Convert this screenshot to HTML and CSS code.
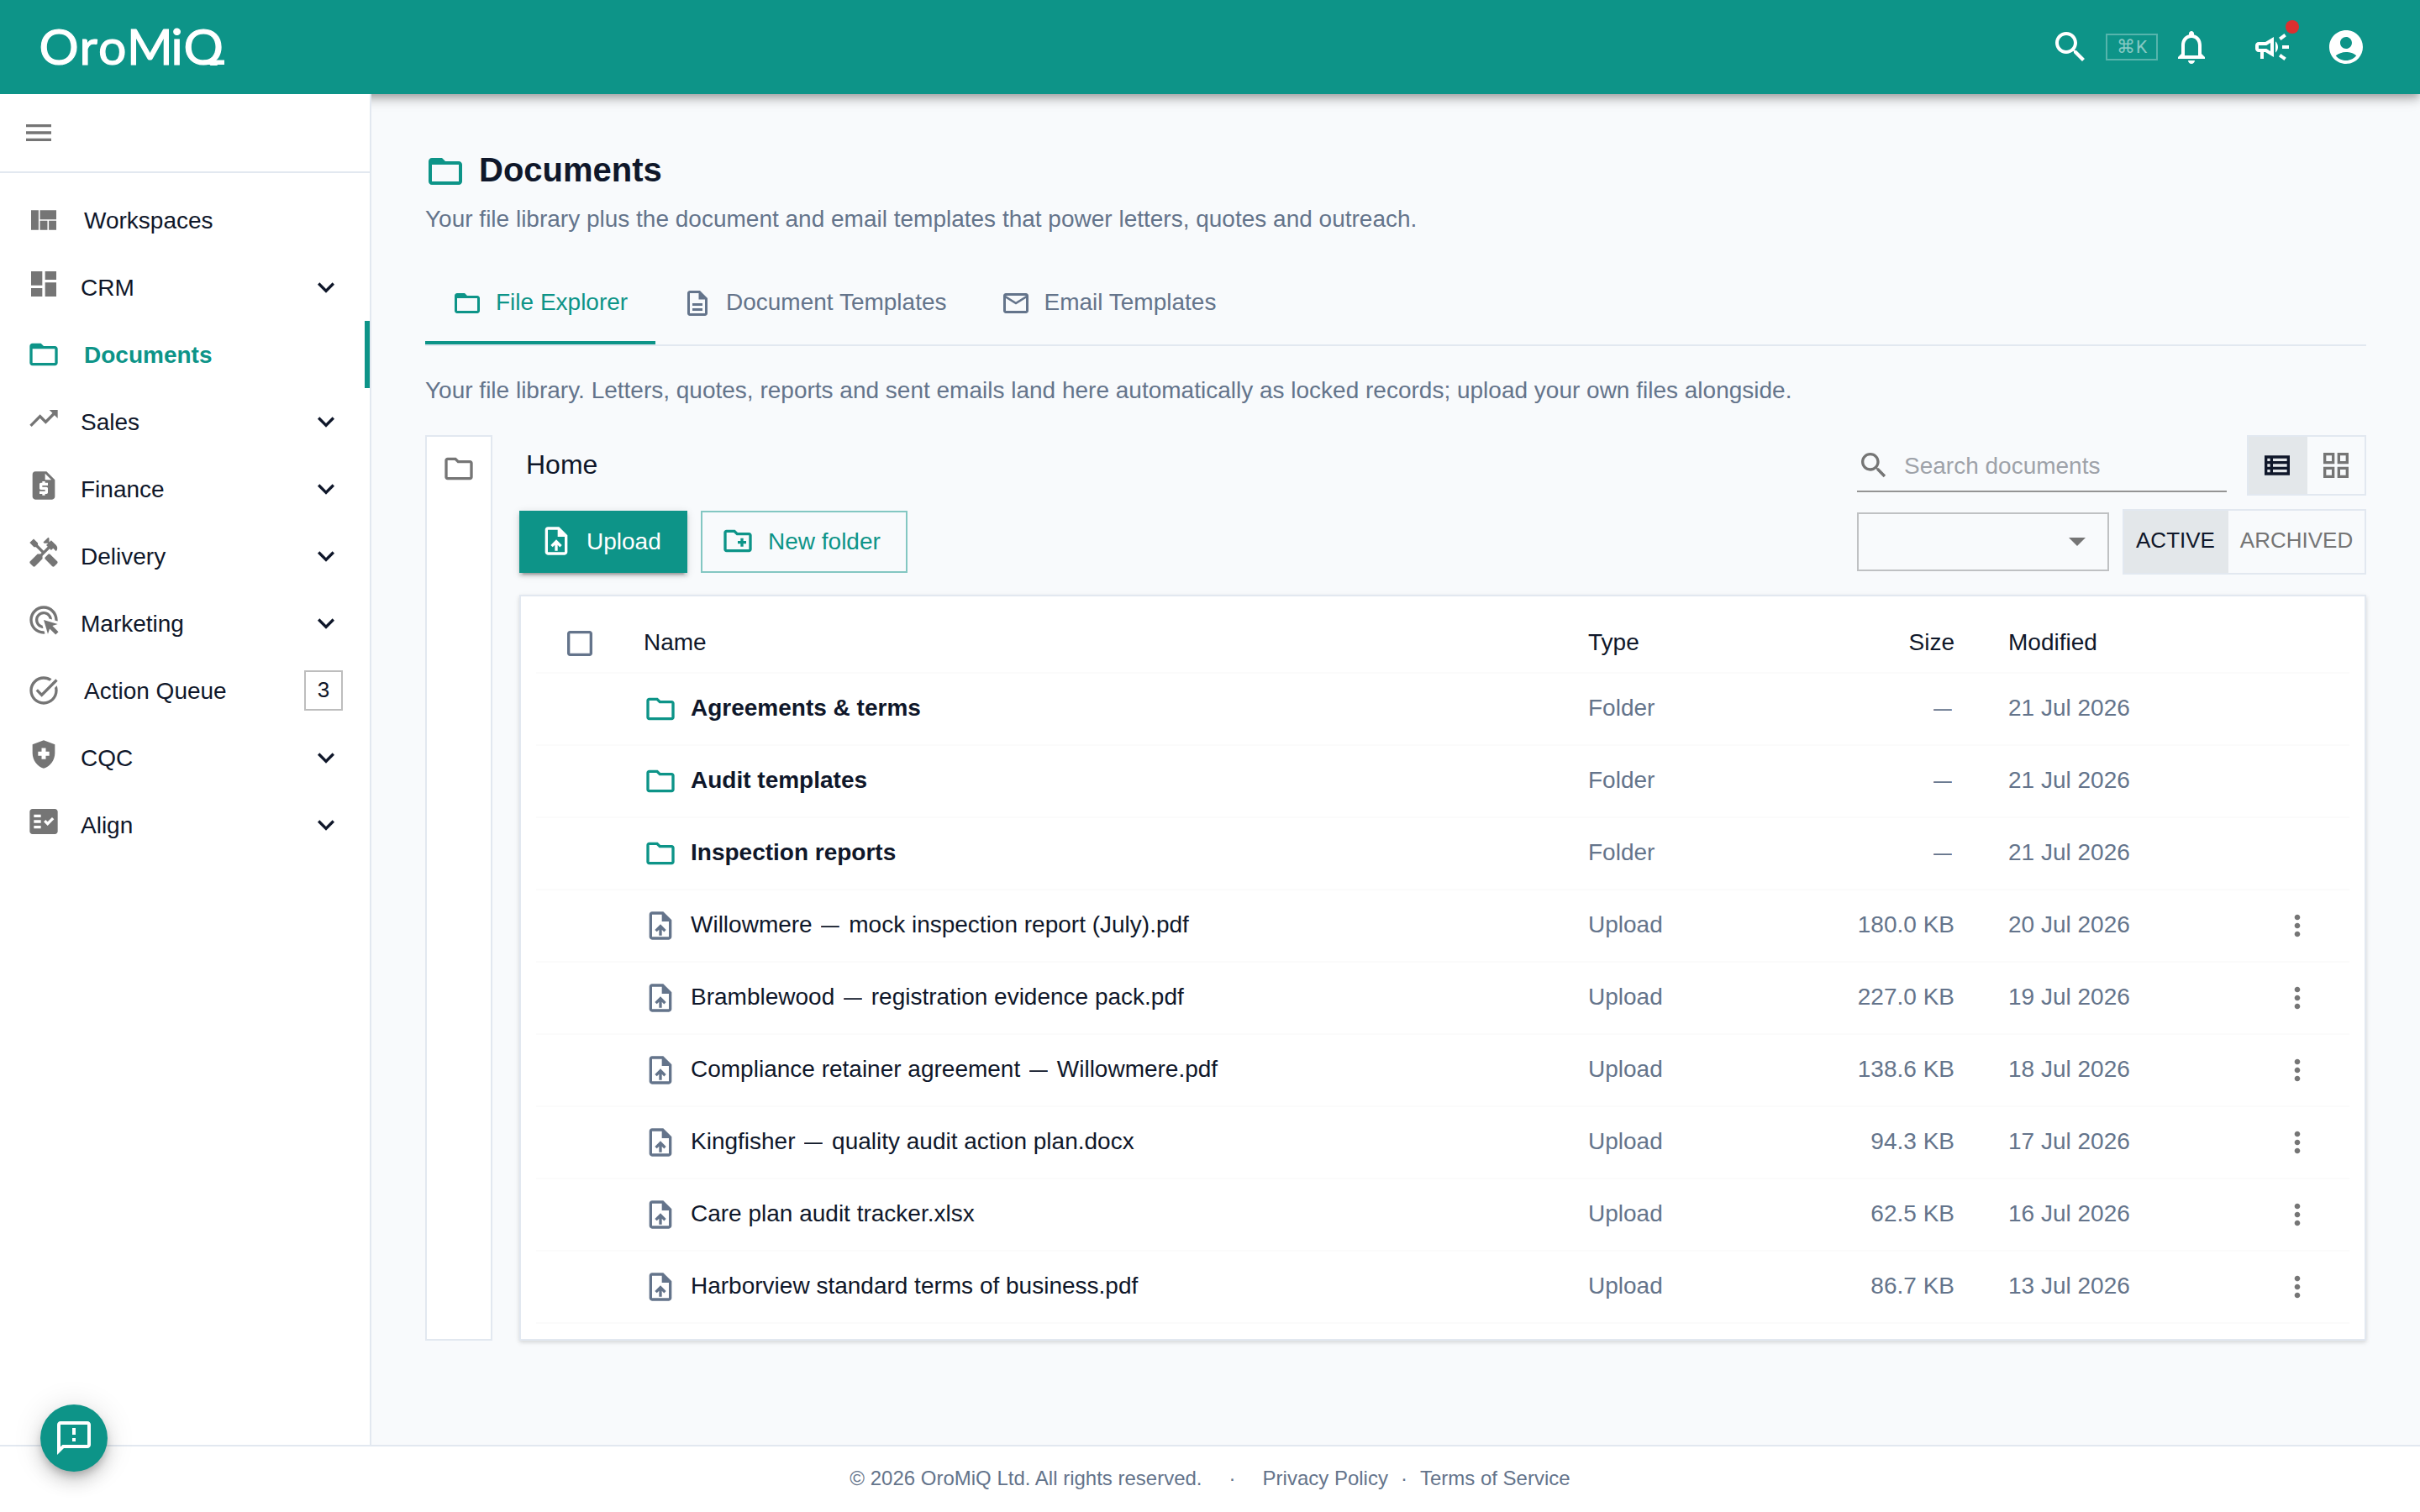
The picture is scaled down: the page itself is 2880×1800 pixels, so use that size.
FILE: index.html
```html
<!DOCTYPE html>
<html lang="en">
<head>
<meta charset="utf-8">
<title>Documents – OroMiQ</title>
<link rel="stylesheet" href="styles.css">
</head>
<body>
<svg class="sprite" aria-hidden="true">
  <symbol id="menu" viewBox="0 0 24 24"><path d="M3 18h18v-2H3v2zm0-5h18v-2H3v2zm0-7v2h18V6H3z"/></symbol>
  <symbol id="quilt" viewBox="0 0 24 24"><path d="M21 5v6.5H9.33V5H21zm-6.33 14v-6.5H9.33V19h5.34zm1-6.5V19H21v-6.5h-5.33zM8.33 19V5H3v14h5.33z"/></symbol>
  <symbol id="dashboard" viewBox="0 0 24 24"><path d="M3 13h8V3H3v10zm0 8h8v-6H3v6zm10 0h8V11h-8v10zm0-18v6h8V3h-8z"/></symbol>
  <symbol id="folder-open" viewBox="0 0 24 24"><path d="M20 6h-8l-2-2H4c-1.1 0-1.99.9-1.99 2L2 18c0 1.1.9 2 2 2h16c1.1 0 2-.9 2-2V8c0-1.1-.9-2-2-2zm0 12H4V8h16v10z"/></symbol>
  <symbol id="folder" viewBox="0 0 24 24"><path d="M9.17 6l2 2H20v10H4V6h5.17M10 4H4c-1.1 0-1.99.9-1.99 2L2 18c0 1.1.9 2 2 2h16c1.1 0 2-.9 2-2V8c0-1.1-.9-2-2-2h-8l-2-2z"/></symbol>
  <symbol id="trending" viewBox="0 0 24 24"><path d="M16 6l2.29 2.29-4.88 4.88-4-4L2 16.59 3.41 18l6-6 4 4 6.3-6.29L22 12V6z"/></symbol>
  <symbol id="request" viewBox="0 0 24 24"><path d="M14 2H6c-1.1 0-1.99.9-1.99 2L4 20c0 1.1.89 2 1.99 2H18c1.1 0 2-.9 2-2V8l-6-6zm1 10h-4v1h3c.55 0 1 .45 1 1v3c0 .55-.45 1-1 1h-1v1h-2v-1H9v-2h4v-1h-3c-.55 0-1-.45-1-1v-3c0-.55.45-1 1-1h1V9h2v1h2v2zm-2-4V3.5L17.5 8H13z"/></symbol>
  <symbol id="handyman" viewBox="0 0 24 24"><path d="m21.67 18.17-5.3-5.3h-.99l-2.54 2.54v.99l5.3 5.3c.39.39 1.02.39 1.41 0l2.12-2.12c.39-.38.39-1.02 0-1.41z"/><path d="m17.34 10.19 1.41-1.41 2.12 2.12c1.17-1.17 1.17-3.07 0-4.24l-3.54-3.54-1.41 1.41V1.71L15.22 1l-3.54 3.54.71.71h2.83l-1.41 1.41 1.06 1.06-2.89 2.89-4.13-4.13V5.06L4.83 2.04 2 4.87 5.03 7.9h1.41l4.13 4.13-.85.85H7.6l-5.3 5.3c-.39.39-.39 1.02 0 1.41l2.12 2.12c.39.39 1.02.39 1.41 0l5.3-5.3v-2.12l5.15-5.15 1.05 1.05z"/></symbol>
  <symbol id="ads" viewBox="0 0 24 24"><path d="M11.71 17.99C8.53 17.84 6 15.22 6 12c0-3.31 2.69-6 6-6 3.22 0 5.84 2.53 5.99 5.71l-2.1-.63C15.48 9.31 13.89 8 12 8c-2.21 0-4 1.79-4 4 0 1.89 1.31 3.48 3.08 3.89l.63 2.1zM22 12c0 .3-.01.6-.04.9l-1.97-.59c.01-.1.01-.21.01-.31 0-4.42-3.58-8-8-8s-8 3.58-8 8 3.58 8 8 8c.1 0 .21 0 .31-.01l.59 1.97c-.3.03-.6.04-.9.04-5.52 0-10-4.48-10-10S6.48 2 12 2s10 4.48 10 10zm-3.77 4.26L22 15l-10-3 3 10 1.26-3.77 4.27 4.27 1.98-1.98-4.28-4.26z"/></symbol>
  <symbol id="task" viewBox="0 0 24 24"><path d="M22 5.18 10.59 16.6l-4.24-4.24 1.41-1.41 2.83 2.83 10-10L22 5.18zm-2.21 5.04c.13.57.21 1.17.21 1.78 0 4.42-3.58 8-8 8s-8-3.58-8-8 3.58-8 8-8c1.58 0 3.04.46 4.28 1.25l1.44-1.44C16.1 2.67 14.13 2 12 2 6.48 2 2 6.48 2 12s4.48 10 10 10 10-4.48 10-10c0-1.19-.22-2.33-.6-3.39l-1.61 1.61z"/></symbol>
  <symbol id="shield" viewBox="0 0 24 24"><path d="M10.5 13H8v-3h2.5V7.5h3V10H16v3h-2.5v2.5h-3V13zM12 2 4 5v6.09c0 5.05 3.41 9.76 8 10.91 4.59-1.15 8-5.86 8-10.91V5l-8-3z" fill-rule="evenodd"/></symbol>
  <symbol id="fact" viewBox="0 0 24 24"><path fill-rule="evenodd" d="M20 3H4c-1.1 0-2 .9-2 2v14c0 1.1.9 2 2 2h16c1.1 0 2-.9 2-2V5c0-1.1-.9-2-2-2zM10 17H5v-2h5v2zm0-4H5v-2h5v2zm0-4H5V7h5v2zm4.82 6L12 12.16l1.41-1.41 1.41 1.42L17.99 9l1.42 1.42L14.82 15z"/></symbol>
  <symbol id="chevron" viewBox="0 0 24 24"><path d="M7.41 8.59 12 13.17l4.59-4.58L18 10l-6 6-6-6 1.41-1.41z"/></symbol>
  <symbol id="search" viewBox="0 0 24 24"><path d="M15.5 14h-.79l-.28-.27C15.41 12.59 16 11.11 16 9.5 16 5.91 13.09 3 9.5 3S3 5.91 3 9.5 5.91 16 9.5 16c1.61 0 3.09-.59 4.23-1.57l.27.28v.79l5 4.99L20.49 19l-4.99-5zm-6 0C7.01 14 5 11.99 5 9.5S7.01 5 9.5 5 14 7.01 14 9.5 11.99 14 9.5 14z"/></symbol>
  <symbol id="bell" viewBox="0 0 24 24"><path d="M12 22c1.1 0 2-.9 2-2h-4c0 1.1.9 2 2 2zm6-6v-5c0-3.07-1.63-5.64-4.5-6.32V4c0-.83-.67-1.5-1.5-1.5s-1.5.67-1.5 1.5v.68C7.64 5.36 6 7.92 6 11v5l-2 2v1h16v-1l-2-2zm-2 1H8v-6c0-2.48 1.51-4.5 4-4.5s4 2.02 4 4.5v6z"/></symbol>
  <symbol id="campaign" viewBox="0 0 24 24"><path d="M18 11v2h4v-2h-4zm-2 6.61c.96.71 2.21 1.65 3.2 2.39.4-.53.8-1.07 1.2-1.6-.99-.74-2.24-1.68-3.2-2.4-.4.54-.8 1.08-1.2 1.61zM20.4 5.6c-.4-.53-.8-1.07-1.2-1.6-.99.74-2.24 1.68-3.2 2.4.4.53.8 1.07 1.2 1.6.96-.72 2.21-1.65 3.2-2.4zM4 9c-1.1 0-2 .9-2 2v2c0 1.1.9 2 2 2h1v4h2v-4h1l5 3V6L8 9H4zm5.03 1.71L11 9.53v4.94l-1.97-1.18-.48-.29H4v-2h4.55l.48-.29zM15.5 12c0-1.33-.58-2.53-1.5-3.35v6.69c.92-.81 1.5-2.01 1.5-3.34z"/></symbol>
  <symbol id="account" viewBox="0 0 24 24"><path d="M12 2C6.48 2 2 6.48 2 12s4.48 10 10 10 10-4.48 10-10S17.52 2 12 2zm0 4c1.93 0 3.5 1.57 3.5 3.5S13.93 13 12 13s-3.5-1.57-3.5-3.5S10.07 6 12 6zm0 14c-2.03 0-4.43-.82-6.14-2.88C7.55 15.8 9.68 15 12 15s4.45.8 6.14 2.12C16.43 19.18 14.03 20 12 20z"/></symbol>
  <symbol id="description" viewBox="0 0 24 24"><path d="M8 16h8v2H8zm0-4h8v2H8zm6-10H6c-1.1 0-2 .9-2 2v16c0 1.1.89 2 1.99 2H18c1.1 0 2-.9 2-2V8l-6-6zm4 18H6V4h7v5h5v11z"/></symbol>
  <symbol id="mail" viewBox="0 0 24 24"><path d="M20 4H4c-1.1 0-1.99.9-1.99 2L2 18c0 1.1.9 2 2 2h16c1.1 0 2-.9 2-2V6c0-1.1-.9-2-2-2zm0 14H4V8l8 5 8-5v10zm-8-7L4 6h16l-8 5z"/></symbol>
  <symbol id="upload" viewBox="0 0 24 24"><path d="M14 2H6c-1.1 0-1.99.9-1.99 2L4 20c0 1.1.89 2 1.99 2H18c1.1 0 2-.9 2-2V8l-6-6zm4 18H6V4h7v5h5v11zM8 15.01l1.41 1.41L11 14.84V19h2v-4.16l1.59 1.59L16 15.01 12.01 11 8 15.01z"/></symbol>
  <symbol id="new-folder" viewBox="0 0 24 24"><path d="M20 6h-8l-2-2H4c-1.11 0-1.99.89-1.99 2L2 18c0 1.11.89 2 2 2h16c1.11 0 2-.89 2-2V8c0-1.11-.89-2-2-2zm0 12H4V6h5.17l2 2H20v10zm-8-4h2v2h2v-2h2v-2h-2v-2h-2v2h-2z"/></symbol>
  <symbol id="list" viewBox="0 0 24 24"><path d="M3 5v14h18V5H3zm4 2v2H5V7h2zm-2 6v-2h2v2H5zm0 2h2v2H5v-2zm14 2H9v-2h10v2zm0-4H9v-2h10v2zm0-4H9V7h10v2z"/></symbol>
  <symbol id="grid" viewBox="0 0 24 24"><path d="M3 3v8h8V3H3zm6 6H5V5h4v4zm-6 4v8h8v-8H3zm6 6H5v-4h4v4zm4-16v8h8V3h-8zm6 6h-4V5h4v4zm-6 4v8h8v-8h-8zm6 6h-4v-4h4v4z"/></symbol>
  <symbol id="drop" viewBox="0 0 24 24"><path d="M7 10l5 5 5-5z"/></symbol>
  <symbol id="checkbox" viewBox="0 0 24 24"><path d="M19 5v14H5V5h14m0-2H5c-1.1 0-2 .9-2 2v14c0 1.1.9 2 2 2h14c1.1 0 2-.9 2-2V5c0-1.1-.9-2-2-2z"/></symbol>
  <symbol id="more" viewBox="0 0 24 24"><path d="M12 8c1.1 0 2-.9 2-2s-.9-2-2-2-2 .9-2 2 .9 2 2 2zm0 2c-1.1 0-2 .9-2 2s.9 2 2 2 2-.9 2-2-.9-2-2-2zm0 6c-1.1 0-2 .9-2 2s.9 2 2 2 2-.9 2-2-.9-2-2-2z"/></symbol>
  <symbol id="feedback" viewBox="0 0 24 24"><path d="M20 2H4c-1.1 0-1.99.9-1.99 2L2 22l4-4h14c1.1 0 2-.9 2-2V4c0-1.1-.9-2-2-2zm0 14H5.17l-.59.59-.58.58V4h16v12zm-9-4h2v2h-2zm0-6h2v4h-2z"/></symbol>
</svg>

<div class="app">
  <header class="topbar">
    <svg class="logo" viewBox="0 0 240 112">
      <clipPath id="baseline"><rect x="-10" y="0" width="260" height="78"/></clipPath>
      <text y="76.5" x="-1.5 46.5 69 103 155.5 170.5" clip-path="url(#baseline)">OroMiQ</text>
      <rect x="194" y="71.5" width="25" height="5.5" fill="#fff"/>
    </svg>
    <div class="tools">
      <svg class="icon lg"><use href="#search"/></svg>
      <kbd class="shortcut"><span class="cmd">⌘</span>K</kbd>
      <svg class="icon lg bell"><use href="#bell"/></svg>
      <span class="news"><svg class="icon lg"><use href="#campaign"/></svg><i class="dot"></i></span>
      <svg class="icon lg"><use href="#account"/></svg>
    </div>
  </header>

  <div class="body">
    <aside class="sidebar">
      <div class="side-head"><svg class="icon"><use href="#menu"/></svg></div>
      <nav class="nav">
        <a class="item leaf"><svg class="icon"><use href="#quilt"/></svg><span>Workspaces</span></a>
        <a class="item group"><svg class="icon"><use href="#dashboard"/></svg><span>CRM</span><svg class="icon chev"><use href="#chevron"/></svg></a>
        <a class="item leaf active"><svg class="icon"><use href="#folder-open"/></svg><span>Documents</span></a>
        <a class="item group"><svg class="icon"><use href="#trending"/></svg><span>Sales</span><svg class="icon chev"><use href="#chevron"/></svg></a>
        <a class="item group"><svg class="icon"><use href="#request"/></svg><span>Finance</span><svg class="icon chev"><use href="#chevron"/></svg></a>
        <a class="item group"><svg class="icon"><use href="#handyman"/></svg><span>Delivery</span><svg class="icon chev"><use href="#chevron"/></svg></a>
        <a class="item group"><svg class="icon"><use href="#ads"/></svg><span>Marketing</span><svg class="icon chev"><use href="#chevron"/></svg></a>
        <a class="item leaf"><svg class="icon"><use href="#task"/></svg><span>Action Queue</span><b class="count">3</b></a>
        <a class="item group"><svg class="icon"><use href="#shield"/></svg><span>CQC</span><svg class="icon chev"><use href="#chevron"/></svg></a>
        <a class="item group"><svg class="icon"><use href="#fact"/></svg><span>Align</span><svg class="icon chev"><use href="#chevron"/></svg></a>
      </nav>
    </aside>

    <main class="main">
      <div class="title"><svg class="icon lg"><use href="#folder-open"/></svg><h1>Documents</h1></div>
      <p class="subtitle">Your file library plus the document and email templates that power letters, quotes and outreach.</p>
      <div class="tabs">
        <a class="tab on"><svg class="icon sm"><use href="#folder-open"/></svg><span>File Explorer</span></a>
        <a class="tab"><svg class="icon sm"><use href="#description"/></svg><span>Document Templates</span></a>
        <a class="tab"><svg class="icon sm"><use href="#mail"/></svg><span>Email Templates</span></a>
      </div>
      <p class="intro">Your file library. Letters, quotes, reports and sent emails land here automatically as locked records; upload your own files alongside.</p>

      <div class="explorer">
        <div class="rail"><svg class="icon"><use href="#folder"/></svg></div>
        <section class="pane">
          <div class="bar top">
            <span class="crumb">Home</span>
            <div class="search"><svg class="icon"><use href="#search"/></svg><span>Search documents</span></div>
            <div class="toggle view">
              <span class="opt sel"><svg class="icon"><use href="#list"/></svg></span>
              <span class="opt"><svg class="icon"><use href="#grid"/></svg></span>
            </div>
          </div>
          <div class="bar actions">
            <a class="btn primary"><svg class="icon"><use href="#upload"/></svg><span>Upload</span></a>
            <a class="btn outline"><svg class="icon"><use href="#new-folder"/></svg><span>New folder</span></a>
            <div class="select"><svg class="icon lg"><use href="#drop"/></svg></div>
            <div class="toggle state"><span class="opt sel">ACTIVE</span><span class="opt">ARCHIVED</span></div>
          </div>
          <div class="card">
            <div class="row head"><span class="check"><svg class="icon"><use href="#checkbox"/></svg></span><span class="t">Name</span><span class="t">Type</span><span class="t size">Size</span><span class="t date">Modified</span></div>
            <div class="row dir"><span></span><span class="name"><svg class="icon"><use href="#folder"/></svg><span class="t">Agreements &amp; terms</span></span><span class="t">Folder</span><span class="t size"><i class="dash">—</i></span><span class="t date">21 Jul 2026</span></div>
            <div class="row dir"><span></span><span class="name"><svg class="icon"><use href="#folder"/></svg><span class="t">Audit templates</span></span><span class="t">Folder</span><span class="t size"><i class="dash">—</i></span><span class="t date">21 Jul 2026</span></div>
            <div class="row dir"><span></span><span class="name"><svg class="icon"><use href="#folder"/></svg><span class="t">Inspection reports</span></span><span class="t">Folder</span><span class="t size"><i class="dash">—</i></span><span class="t date">21 Jul 2026</span></div>
            <div class="row"><span></span><span class="name"><svg class="icon"><use href="#upload"/></svg><span class="t">Willowmere <i class="dash">—</i> mock inspection report (July).pdf</span></span><span class="t">Upload</span><span class="t size">180.0 KB</span><span class="t date">20 Jul 2026</span><svg class="icon more"><use href="#more"/></svg></div>
            <div class="row"><span></span><span class="name"><svg class="icon"><use href="#upload"/></svg><span class="t">Bramblewood <i class="dash">—</i> registration evidence pack.pdf</span></span><span class="t">Upload</span><span class="t size">227.0 KB</span><span class="t date">19 Jul 2026</span><svg class="icon more"><use href="#more"/></svg></div>
            <div class="row"><span></span><span class="name"><svg class="icon"><use href="#upload"/></svg><span class="t">Compliance retainer agreement <i class="dash">—</i> Willowmere.pdf</span></span><span class="t">Upload</span><span class="t size">138.6 KB</span><span class="t date">18 Jul 2026</span><svg class="icon more"><use href="#more"/></svg></div>
            <div class="row"><span></span><span class="name"><svg class="icon"><use href="#upload"/></svg><span class="t">Kingfisher <i class="dash">—</i> quality audit action plan.docx</span></span><span class="t">Upload</span><span class="t size">94.3 KB</span><span class="t date">17 Jul 2026</span><svg class="icon more"><use href="#more"/></svg></div>
            <div class="row"><span></span><span class="name"><svg class="icon"><use href="#upload"/></svg><span class="t">Care plan audit tracker.xlsx</span></span><span class="t">Upload</span><span class="t size">62.5 KB</span><span class="t date">16 Jul 2026</span><svg class="icon more"><use href="#more"/></svg></div>
            <div class="row"><span></span><span class="name"><svg class="icon"><use href="#upload"/></svg><span class="t">Harborview standard terms of business.pdf</span></span><span class="t">Upload</span><span class="t size">86.7 KB</span><span class="t date">13 Jul 2026</span><svg class="icon more"><use href="#more"/></svg></div>
          </div>
        </section>
      </div>
    </main>
  </div>

  <footer class="footer"><span>© 2026 OroMiQ Ltd. All rights reserved.</span><span class="sep">·</span><a>Privacy Policy</a><span class="sep2">·</span><a>Terms of Service</a></footer>
  <a class="fab"><svg class="icon lg"><use href="#feedback"/></svg></a>
</div>
</body>
</html>
```
FILE: styles.css
```css
* { box-sizing: border-box; }
body {
  margin: 0;
  font: 28px/40px "Liberation Sans", Helvetica, Arial, sans-serif;
  color: #0f172a;
  background: #f8fafc;
}
h1, p { margin: 0; }
.sprite { display: none; }
.icon { width: 40px; height: 40px; fill: currentColor; flex: none; display: block; }
.icon.sm { width: 36px; height: 36px; }
.icon.lg { width: 48px; height: 48px; }

.app { width: 2880px; height: 1800px; display: flex; flex-direction: column; position: relative; overflow: hidden; }

/* Top bar */
.topbar {
  height: 112px; flex: none; background: #0d9488; color: #fff;
  display: flex; align-items: center; justify-content: space-between;
  padding: 0 64px 0 48px; position: relative; z-index: 1;
  box-shadow: 0 4px 8px -2px rgba(0,0,0,.2), 0 8px 10px rgba(0,0,0,.14), 0 2px 20px rgba(0,0,0,.12);
}
.logo { width: 240px; height: 112px; overflow: visible; }
.logo text { font: 400 59px Lato, sans-serif; fill: #fff; stroke: #fff; stroke-width: 1.2px; }
.tools { display: flex; align-items: center; }
.shortcut {
  width: 62px; height: 32px; margin: 0 16px 0 18px;
  border: 2px solid rgba(255,255,255,.3); color: rgba(255,255,255,.5);
  font: 21px/28px Roboto, sans-serif; display: flex; justify-content: center; align-items: center; gap: 1px;
}
.cmd { font: 22px/28px "DejaVu Sans", sans-serif; }
.news { position: relative; margin: 0 40px 0 48px; }
.dot { position: absolute; right: -8px; top: -8px; width: 16px; height: 16px; border-radius: 50%; background: #dc2f2f; }

/* Sidebar */
.body { flex: 1; display: flex; min-height: 0; }
.sidebar { width: 442px; flex: none; background: #fff; border-right: 2px solid #e2e8f0; position: relative; z-index: 2; }
.side-head { height: 94px; border-bottom: 2px solid #e2e8f0; padding: 26px; color: #757575; }
.nav { padding-top: 16px; display: flex; flex-direction: column; }
.item { height: 80px; display: flex; align-items: center; padding: 0 32px; }
.item > span { padding-top: 2px; }
.item > .icon:first-child { color: #757575; }
.group > .icon:first-child { margin-bottom: 8px; }
.leaf span { margin-left: 28px; }
.group span { margin-left: 24px; }
.chev { margin-left: auto; }
.item.active { color: #0d9488; font-weight: 700; border-right: 6px solid #0d9488; }
.active > .icon:first-child { color: #0d9488; }
.count { margin-left: auto; width: 46px; height: 48px; border: 2px solid #bdbdbd; font: 26px/43px "Liberation Sans", Arial, sans-serif; text-align: center; }

/* Page heading and tabs */
.main { flex: 1; padding: 68px 64px 0; }
.title { display: flex; align-items: center; gap: 16px; height: 48px; color: #0d9488; }
.title h1 { font-size: 40px; line-height: 44px; color: #0f172a; margin-bottom: 4px; }
.subtitle, .intro { color: #64748b; }
.subtitle { margin-top: 13px; }
.tabs { display: flex; height: 96px; margin-top: 35px; border-bottom: 2px solid #e2e8f0; }
.tab { display: flex; align-items: center; gap: 16px; padding: 0 32px; color: #64748b; border-bottom: 4px solid transparent; }
.tab span { margin-bottom: 2px; }
.tab.on { width: 274px; color: #0d9488; border-color: #0d9488; }
.intro { margin-top: 33px; }

/* Explorer */
.explorer { display: flex; gap: 32px; margin-top: 33px; height: 1078px; }
.rail { width: 80px; background: #fff; border: 2px solid #e2e8f0; padding: 18px; color: #757575; }
.pane { flex: 1; display: flex; flex-direction: column; }
.bar { display: flex; align-items: center; }
.top { height: 72px; }
.crumb { font-size: 32px; padding: 0 0 2px 8px; }
.search { margin-left: auto; width: 440px; height: 68px; margin-bottom: 4px; border-bottom: 2px solid #949494; display: flex; align-items: center; gap: 16px; color: #757575; padding-top: 6px; }
.search span { color: #9ea2a9; padding-top: 1px; }
.toggle { display: flex; border: 2px solid #e2e8f0; color: #757575; }
.opt { display: flex; align-items: center; justify-content: center; }
.sel { background: #e3e7ea; color: #0f172a; padding-right: 2px; }
.view { margin-left: 24px; width: 142px; height: 72px; }
.view .opt { flex: 1; }
.view .sel { flex: 0 0 70px; }
.actions { height: 78px; margin-top: 16px; }
.btn { height: 74px; display: flex; align-items: center; gap: 16px; padding-right: 32px; }
.btn .icon { margin-left: 24px; margin-bottom: 2px; }
.btn span { margin-bottom: 1px; }
.primary { width: 200px; background: #0d9488; color: #fff; box-shadow: 0 6px 2px -4px rgba(0,0,0,.2), 0 4px 4px rgba(0,0,0,.14), 0 2px 10px rgba(0,0,0,.12); }
.outline { width: 246px; margin-left: 16px; border: 2px solid rgba(13,148,136,.5); color: #0d9488; padding-right: 30px; }
.outline .icon { margin-left: 22px; }
.select { margin-left: auto; width: 300px; height: 70px; border: 2px solid #bfc1c3; display: flex; justify-content: flex-end; align-items: center; padding: 0 12px 2px; color: #757575; }
.state { margin-left: 16px; width: 290px; height: 78px; font-size: 26px; }
.state .opt { flex: 1; padding-bottom: 5px; }
.state .sel { flex: 0 0 124px; }

/* File table */
.card { margin-top: 24px; height: 888px; background: #fff; border: 2px solid #e2e8f0; padding: 18px; box-shadow: 0 2px 6px rgba(0,0,0,.1), 0 2px 4px rgba(0,0,0,.06); }
.row { height: 86px; display: grid; grid-template-columns: 128px 1124px 200px 236px 388px 82px; align-items: center; border-bottom: 2px solid #fbfbfb; color: #64748b; }
.row .t { margin-bottom: 3px; }
.head { height: 74px; color: #0f172a; }
.row.head .t { margin-top: 2px; margin-bottom: 0; }
.check { padding: 4px 0 0 32px; color: #64748b; }
.name { display: flex; align-items: center; gap: 16px; }
.name .t { color: #0f172a; }
.dir .name { color: #0d9488; font-weight: 700; }
.dash { display: inline-block; font-style: normal; transform: scaleX(.78); }
.size { text-align: right; }
.date { padding-left: 64px; }
.more { color: #757575; }

/* Footer */
.footer { height: 80px; flex: none; border-top: 2px solid #e2e8f0; background: #fff; display: flex; justify-content: center; align-items: center; font-size: 24px; color: #64748b; position: relative; z-index: 2; padding-bottom: 2px; }
.sep { margin: 0 32px; }
.sep2 { margin: 0 15px; }
.fab {
  position: absolute; left: 48px; bottom: 48px; z-index: 3; width: 80px; height: 80px; border-radius: 50%;
  background: #0d9488; color: #fff; display: flex; align-items: center; justify-content: center;
  box-shadow: 0 6px 10px -2px rgba(0,0,0,.2), 0 12px 20px rgba(0,0,0,.14), 0 2px 36px rgba(0,0,0,.12);
}
```
